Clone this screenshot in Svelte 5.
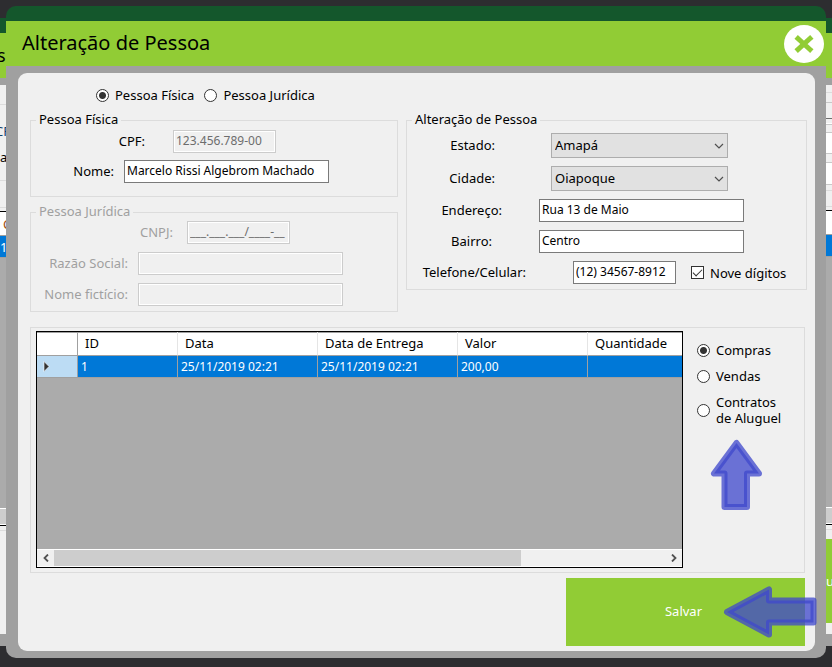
<script>
  let kind = $state('fisica');
  let history = $state('compras');
  let nineDigits = $state(true);
  let cpf = $state('123.456.789-00');
  let name = $state('Marcelo Rissi Algebrom Machado');
  let cnpj = $state('___.___.___/____-__');
  let company = $state('');
  let tradeName = $state('');
  let uf = $state('Amapá');
  let city = $state('Oiapoque');
  let address = $state('Rua 13 de Maio');
  let district = $state('Centro');
  let phone = $state('(12) 34567-8912');

  const columns = ['ID', 'Data', 'Data de Entrega', 'Valor', 'Quantidade'];
  const rows = [['1', '25/11/2019 02:21', '25/11/2019 02:21', '200,00', '']];

  // Visible slivers of the window behind the dialog: [height, kind, text]
  const grid = [
    [1, 'black'], [23, 'white'], [1, 'mid'], [21, 'blue'], [1, 'mid'], [250, 'gray'],
    [1, 'white'], [15, 'thumb'], [1, 'white'], [1, 'black'], [4, ''], [1, 'line']
  ];
  const leftStrip = [
    [19, ''], [1, 'line'], [17, ''], [18, 'navy', 'CP'], [8, ''], [18, 'start', 'az'],
    [14, ''], [1, 'line'], [26, ''], [1, 'line'], [20, ''],
    [1, 'black'], [23, 'white', 'C'], [1, 'mid'], [21, 'blue', '1'], ...grid.slice(4)
  ];
  const rightStrip = [
    [7, ''], [1, 'line'], [9, ''], [1, 'edge'], [15, ''], [1, 'dark'], [4, ''],
    [1, 'white'], [1, 'edge'], [7, ''], [1, 'edge'], [20, 'white'], [1, 'edge'], [8, ''],
    [1, 'edge'], [21, 'white'], [1, 'edge'], [5, ''], [1, 'line'], [15, ''], [1, 'line'], [3, ''],
    ...grid, [9, ''], [84, 'lime', 'u']
  ];
  leftStrip[10][0] = 3;
</script>

{#snippet strip(items, side)}
  <div class="strip {side}">
    {#each items as [height, tone, text]}
      <div class="piece {tone}" style:height="{height}px">{text ?? ''}</div>
    {/each}
  </div>
{/snippet}

<div class="desktop">
  <div class="behind" aria-hidden="true">
    <div class="behind-top"></div>
    <div class="behind-title">s</div>
    <div class="behind-body">
      {@render strip(leftStrip, 'left')}
      {@render strip(rightStrip, 'right')}
    </div>
  </div>

  <main class="window">
    <header>
      <h1>Alteração de Pessoa</h1>
      <button class="close" aria-label="Fechar">
        <svg viewBox="0 0 40 38" width="40" height="38">
          <ellipse cx="20" cy="19" rx="20" ry="19" fill="#fff" />
          <path d="M14 13.5L26 24.5M26 13.5L14 24.5" stroke="#91cc35" stroke-width="5" stroke-linecap="square" />
        </svg>
      </button>
    </header>

    <form class="panel" onsubmit={(e) => e.preventDefault()}>
      <div class="kinds">
        <label><input type="radio" name="kind" value="fisica" bind:group={kind} />Pessoa Física</label>
        <label><input type="radio" name="kind" value="juridica" bind:group={kind} />Pessoa Jurídica</label>
      </div>

      <div class="columns">
        <div class="left-column">
          <fieldset class="fisica">
            <legend>Pessoa Física</legend>
            <div class="row mask-row">
              <label for="cpf">CPF:</label>
              <input id="cpf" class="short" disabled bind:value={cpf} />
            </div>
            <div class="row">
              <label for="nome">Nome:</label>
              <input id="nome" bind:value={name} />
            </div>
          </fieldset>

          <fieldset class="juridica" disabled>
            <legend>Pessoa Jurídica</legend>
            <div class="row mask-row">
              <label for="cnpj">CNPJ:</label>
              <input id="cnpj" class="short" bind:value={cnpj} />
            </div>
            <div class="row">
              <label for="razao">Razão Social:</label>
              <input id="razao" bind:value={company} />
            </div>
            <div class="row">
              <label for="ficticio">Nome fictício:</label>
              <input id="ficticio" bind:value={tradeName} />
            </div>
          </fieldset>
        </div>

        <fieldset class="address">
          <legend>Alteração de Pessoa</legend>
          <div class="row pick">
            <label for="estado">Estado:</label>
            <span class="select">
              <select id="estado" bind:value={uf}><option>Amapá</option></select>
              <svg viewBox="0 0 10 6" width="10" height="6"><path d="M1 1L5 5L9 1" /></svg>
            </span>
          </div>
          <div class="row pick">
            <label for="cidade">Cidade:</label>
            <span class="select">
              <select id="cidade" bind:value={city}><option>Oiapoque</option></select>
              <svg viewBox="0 0 10 6" width="10" height="6"><path d="M1 1L5 5L9 1" /></svg>
            </span>
          </div>
          <div class="row street">
            <label for="endereco">Endereço:</label>
            <input id="endereco" bind:value={address} />
          </div>
          <div class="row district">
            <label for="bairro">Bairro:</label>
            <input id="bairro" bind:value={district} />
          </div>
          <div class="row phone">
            <label for="telefone">Telefone/Celular:</label>
            <input id="telefone" class="short" bind:value={phone} />
            <label class="check"><input type="checkbox" bind:checked={nineDigits} />Nove dígitos</label>
          </div>
        </fieldset>
      </div>

      <section class="history">
        <div class="data-grid">
          <table>
            <colgroup>
              <col class="w-mark" /><col class="w-id" /><col class="w-date" /><col class="w-date" /><col class="w-value" /><col />
            </colgroup>
            <thead>
              <tr>
                <th class="mark"></th>
                {#each columns as column}<th>{column}</th>{/each}
              </tr>
            </thead>
            <tbody>
              {#each rows as row}
                <tr>
                  <td class="mark"><svg viewBox="0 0 7 11" width="7" height="11"><path d="M1 0.5L6 5.5L1 10.5Z" fill="#333" stroke="#fff" stroke-width="0.6" /></svg></td>
                  {#each row as cell}<td>{cell}</td>{/each}
                </tr>
              {/each}
            </tbody>
          </table>
          <div class="scrollbar">
            <button type="button" aria-label="Rolar para a esquerda"><svg viewBox="0 0 6 8" width="6" height="8"><path d="M5 0.5L1.5 4L5 7.5" /></svg></button>
            <div class="track"><div class="thumb"></div></div>
            <button type="button" aria-label="Rolar para a direita"><svg viewBox="0 0 6 8" width="6" height="8"><path d="M1 0.5L4.5 4L1 7.5" /></svg></button>
          </div>
        </div>
        <div class="filters">
          <label><input type="radio" name="history" value="compras" bind:group={history} />Compras</label>
          <label><input type="radio" name="history" value="vendas" bind:group={history} />Vendas</label>
          <label><input type="radio" name="history" value="contratos" bind:group={history} /><span>Contratos<br />de Aluguel</span></label>
        </div>
      </section>

      <button class="save">Salvar</button>

      <svg class="arrow up" viewBox="0 0 52 71" width="52" height="71">
        <path d="M26.500 4L4 34.500H14.500V68H37V34.500H49Z" />
      </svg>
      <svg class="arrow side" viewBox="0 0 94 52" width="94" height="52">
        <path d="M4 26L46 3.500V14.500H90.500V36.500H46V48.500Z" />
      </svg>
    </form>
  </main>
</div>

<style>
  :global(body) {
    margin: 0;
    background: #2d2d30;
  }

  .desktop {
    position: relative;
    box-sizing: border-box;
    min-height: 100vh;
    padding: 6px 6px 9px;
    overflow: hidden;
    background: #2d2d30;
    color: #000;
    font: 13px/16px 'Noto Sans', 'Open Sans', sans-serif;
  }

  .desktop *,
  .desktop *::before {
    box-sizing: border-box;
  }

  input,
  select,
  button {
    margin: 0;
    font: inherit;
    color: inherit;
  }

  .behind {
    position: absolute;
    inset: 18px 0 21px;
    display: flex;
    flex-direction: column;
    background: #a0a0a0;
  }

  .behind-top {
    height: 15px;
    background: #14572c;
  }

  .behind-title {
    display: flex;
    justify-content: flex-start;
    height: 45px;
    font-size: 18px;
    line-height: 45px;
    text-indent: -3px;
    background: #91cc35;
  }

  .behind-body {
    display: flex;
    flex: 1;
    justify-content: space-between;
    margin: 7px 0 12px;
    background: #f0f0f0;
  }

  .strip {
    width: 6px;
    overflow: hidden;
  }

  .piece {
    display: flex;
    align-items: center;
    overflow: hidden;
  }

  .left .white { padding-left: 3px; color: #a05010; }
  .navy { justify-content: center; color: #12406e; }
  .line { background: #dcdcdc; }
  .edge { background: #c8c8c8; }
  .dark { background: #6e6e6e; }
  .black { background: #000; }
  .white { background: #fff; }
  .mid { background: #a0a0a0; }
  .gray { background: #ababab; }
  .thumb { background: #cdcdcd; }
  .blue { color: #fff; background: #0078d7; }
  .lime { color: #fff; background: #91cc35; }

  .window {
    position: relative;
    padding: 15px 11px 7px 12px;
    border-radius: 10px;
    background: linear-gradient(#14572c 15px, #91cc35 15px, #91cc35 60px, #a0a0a0 60px);
  }

  header {
    display: flex;
    align-items: center;
    justify-content: space-between;
    height: 45px;
    margin: 0 -9px 7px 4px;
  }

  h1 {
    margin: 0;
    padding-bottom: 2px;
    font-size: 20px;
    font-weight: 400;
    line-height: 28px;
  }

  .close {
    display: flex;
    padding: 0;
    border: 0;
    background: none;
  }

  .panel {
    position: relative;
    display: flex;
    flex-direction: column;
    padding: 14px 8px 5px 12px;
    border-radius: 9px;
    background: #f0f0f0;
  }

  .kinds {
    display: flex;
    gap: 10px;
    padding-left: 66px;
  }

  .kinds label,
  .filters label,
  .check {
    display: flex;
    align-items: center;
    gap: 6px;
  }

  input[type='radio'],
  input[type='checkbox'] {
    flex: none;
    width: 13px;
    height: 13px;
    padding: 0;
    appearance: none;
    border: 1px solid #333;
    background: #fff;
  }

  input[type='radio'] {
    border-radius: 50%;
  }

  input[type='radio']:checked {
    background: radial-gradient(circle, #333 3px, #fff 4px);
  }

  input[type='checkbox']:checked::before {
    content: '';
    display: block;
    width: 9px;
    height: 5px;
    margin: 2px 1px;
    border: solid #333;
    border-width: 0 0 1px 1px;
    transform: rotate(-45deg);
  }

  .columns {
    display: grid;
    grid-template-columns: 368fr 401fr;
    gap: 8px;
    align-items: start;
    margin-top: 8px;
  }

  .left-column {
    display: flex;
    flex-direction: column;
    gap: 6px;
  }

  fieldset {
    min-width: 0;
    margin: 0;
    padding: 0;
    border: 1px solid #dcdcdc;
  }

  legend {
    margin-left: 5px;
    padding: 0 3px 2px;
  }

  .row {
    display: flex;
    align-items: center;
    margin-bottom: 8px;
  }

  .row > label:first-child {
    flex: none;
    padding-bottom: 2px;
    text-align: right;
  }

  .row > input {
    width: 205px;
    height: 23px;
    padding: 0 2px 2px;
    border: 1px solid #7a7a7a;
    border-radius: 0;
    background: #fff;
    font-size: 12px;
  }

  .row > .short {
    width: 103px;
  }

  .row > input:disabled {
    border-color: #ccc;
    background: #f0f0f0;
    box-shadow: inset 0 0 0 1px #fff;
    color: #6d6d6d;
  }

  .fisica { padding: 1px 0 6px; }
  .fisica .row { margin-bottom: 7px; }
  .fisica .row > label { width: 83px; margin-right: 10px; }
  .fisica .mask-row > label { width: 114px; margin-right: 28px; }
  .juridica { color: #a0a0a0; }
  .juridica .row:last-child { margin-bottom: 5px; }
  .juridica .row > label { width: 97px; margin-right: 10px; }
  .juridica .mask-row > label { width: 142px; margin-right: 14px; }

  .address { padding-top: 4px; }
  .address .row:last-child { margin-bottom: 5px; }
  .address .pick > label { width: 88px; margin-right: 56px; }
  .address .street > label { width: 95px; margin-right: 37px; }
  .address .district > label { width: 85px; margin-right: 47px; }
  .address .phone > label:first-child { width: 119px; margin-right: 47px; }
  .check { margin-left: 15px; }

  .select {
    position: relative;
    display: flex;
    width: 177px;
  }

  select {
    width: 100%;
    height: 25px;
    padding: 0 20px 2px 3px;
    appearance: none;
    border: 1px solid #adadad;
    border-radius: 0;
    background: #e1e1e1;
  }

  .select svg {
    position: absolute;
    top: 10px;
    right: 4px;
    pointer-events: none;
  }

  .select path,
  .scrollbar path {
    fill: none;
    stroke: #505050;
    stroke-width: 1.2;
  }

  .scrollbar path {
    stroke-width: 1.8;
  }

  .history {
    display: flex;
    margin: 15px 2px 5px 0;
    padding: 3px 5px 4px;
    border: 1px solid #dcdcdc;
  }

  .data-grid {
    display: flex;
    flex: 1;
    flex-direction: column;
    height: 237px;
    border: 1px solid #000;
    background: #ababab;
  }

  table {
    width: 100%;
    border-spacing: 0;
    table-layout: fixed;
  }

  .w-mark { width: 41px; }
  .w-id { width: 100px; }
  .w-date { width: 140px; }
  .w-value { width: 130px; }

  th,
  td {
    padding: 0 3px;
    border-right: 1px solid #a0a0a0;
    border-bottom: 1px solid #a0a0a0;
    text-align: left;
    white-space: nowrap;
  }

  th {
    height: 24px;
    padding: 0 7px 2px;
    border-right-color: #e5e5e5;
    background: #fff;
    box-shadow: inset 0 1px #a0a0a0;
    font-weight: 400;
  }

  td {
    height: 22px;
    background: #0078d7;
    color: #fff;
    font-size: 12px;
  }

  th.mark { border-right-color: #a0a0a0; }
  td.mark { padding: 0 6px; background: #bcdcf4; }
  th:last-child, td:last-child { border-right: 0; }
  td svg { display: block; }

  .scrollbar {
    display: flex;
    height: 18px;
    margin-top: auto;
    border: solid #fff;
    border-width: 1px 0;
    background: #f0f0f0;
  }

  .scrollbar button {
    display: flex;
    align-items: center;
    justify-content: center;
    width: 17px;
    padding: 0;
    border: 0;
    background: none;
  }

  .track { flex: 1; }
  .track .thumb { width: 76.5%; height: 100%; }

  .filters {
    display: flex;
    flex-direction: column;
    gap: 10px;
    width: 116px;
    padding: 11px 0 0 14px;
  }

  .save {
    align-self: flex-end;
    width: 239px;
    height: 68px;
    margin-right: 2px;
    padding: 0 4px 2px 0;
    border: 0;
    background: #91cc35;
    color: #fff;
  }

  .arrow {
    position: absolute;
    pointer-events: none;
  }

  .arrow path {
    fill: #3f48cc;
    fill-opacity: 0.76;
    stroke: #3f48cc;
    stroke-opacity: 0.76;
    stroke-width: 6;
    stroke-linejoin: round;
  }

  .up {
    right: 53px;
    bottom: 141px;
  }

  .side {
    right: -2px;
    bottom: 13px;
  }
</style>
